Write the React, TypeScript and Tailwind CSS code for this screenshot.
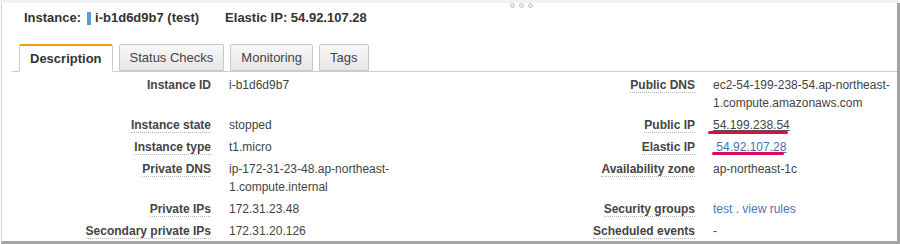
import React from "react";

const Label = ({ children, dotted = true }: { children: React.ReactNode; dotted?: boolean }) => (
  <div className="py-[2px] text-right font-bold text-[#444]">
    <span className={dotted ? "border-b border-dotted border-[#b5b5b5]" : ""}>{children}</span>
  </div>
);

const Value = ({ children }: { children: React.ReactNode }) => (
  <div className="py-[2px] text-[#444]">{children}</div>
);

export default function App() {
  return (
    <div
      className="w-[900px] h-[244px] bg-white flex flex-col overflow-hidden"
      style={{ fontFamily: '"Liberation Sans", Arial, sans-serif' }}
    >
      <div className="h-[3px] bg-[#f1f1f1] relative">
        <div className="absolute left-[510px] top-[3px] flex gap-[4px]">
          <span className="w-[5px] h-[5px] rounded-full border border-[#c4c4c4] bg-[#eee]" />
          <span className="w-[5px] h-[5px] rounded-full border border-[#c4c4c4] bg-[#eee]" />
          <span className="w-[5px] h-[5px] rounded-full border border-[#c4c4c4] bg-[#eee]" />
        </div>
      </div>
      <div className="flex-1 ml-[1px] border-l border-l-[#d6d6d6] border-r-[3px] border-r-[#a3a3a3] border-b-[3px] border-b-[#a3a3a3] overflow-hidden">
        {/* header */}
        <div className="h-[30px] flex items-center pl-[22px] text-[13px] font-bold text-[#333]">
          <span>Instance:</span>
          <span className="ml-[6px] w-[4px] h-[13px] bg-[#5b9bd8]" />
          <span className="ml-[4px]">i-b1d6d9b7 (test)</span>
          <span className="ml-[26px]">Elastic IP: 54.92.107.28</span>
        </div>
        {/* tabs */}
        <div className="mt-[11px] ml-[10px] h-[28px] border-b border-[#cccccc] flex items-start gap-[6px] pl-[7px] text-[13px]">
          <div className="h-[28px] px-[10px] border border-[#cccccc] border-t-2 border-t-[#ff9900] border-b-white bg-white font-bold text-[#333] flex items-center rounded-t-[2px]">
            Description
          </div>
          {["Status Checks", "Monitoring", "Tags"].map((t) => (
            <div
              key={t}
              className="h-[27px] px-[10px] border border-[#c8c8c8] bg-gradient-to-b from-[#f8f8f8] to-[#e6e6e6] text-[#444] flex items-center rounded-t-[2px]"
            >
              {t}
            </div>
          ))}
        </div>
        {/* content */}
        <div className="pt-[2px] ml-[10px] grid grid-cols-[199px_200px_248px_1fr] gap-x-[18px] text-[12px] leading-[18px]">
          <Label dotted={false}>Instance ID</Label>
          <Value>i-b1d6d9b7</Value>
          <Label>Public DNS</Label>
          <Value>
            <div>ec2-54-199-238-54.ap-northeast-</div>
            <div>1.compute.amazonaws.com</div>
          </Value>

          <Label>Instance state</Label>
          <Value>stopped</Value>
          <Label>Public IP</Label>
          <Value>
            <span className="relative inline-block">
              <span className="underline decoration-[#555]">54.199.238.54</span>
              <span className="absolute left-[-5px] top-[15px] w-[80px] h-[3px] rounded-full bg-[#e0094f]" />
            </span>
          </Value>

          <Label>Instance type</Label>
          <Value>t1.micro</Value>
          <Label>Elastic IP</Label>
          <Value>
            <span className="relative inline-block">
              <span className="underline text-[#3b74bd] decoration-[#3b74bd]">&nbsp;54.92.107.28</span>
              <span className="absolute left-[-1px] top-[14px] w-[72px] h-[3px] rounded-full bg-[#e0094f]" />
            </span>
          </Value>

          <Label>Private DNS</Label>
          <Value>
            <div>ip-172-31-23-48.ap-northeast-</div>
            <div>1.compute.internal</div>
          </Value>
          <Label>Availability zone</Label>
          <Value>ap-northeast-1c</Value>

          <Label>Private IPs</Label>
          <Value>172.31.23.48</Value>
          <Label>Security groups</Label>
          <Value>
            <span className="text-[#3f78c0]">test</span>
            <span className="text-[#3f78c0]"> . </span>
            <span className="text-[#3f78c0]">view rules</span>
          </Value>

          <Label>Secondary private IPs</Label>
          <Value>172.31.20.126</Value>
          <Label>Scheduled events</Label>
          <Value>-</Value>
        </div>
      </div>
    </div>
  );
}
